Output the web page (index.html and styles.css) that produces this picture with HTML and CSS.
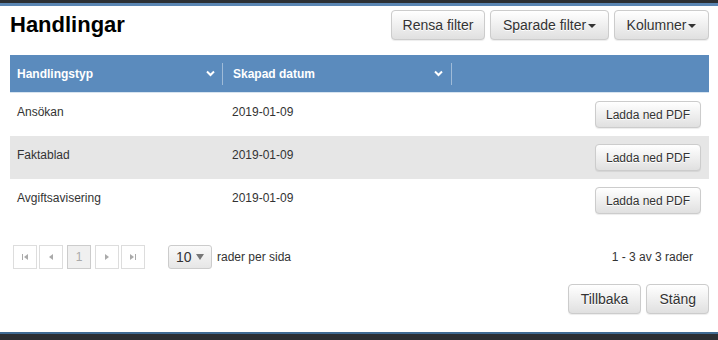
FILE: index.html
```html
<!DOCTYPE html>
<html lang="sv">
<head>
<meta charset="utf-8">
<title>Handlingar</title>
<link rel="stylesheet" href="styles.css">
</head>
<body>
<div class="topbar"></div>
<div class="dialog">
  <div class="head">
    <h1 class="title">Handlingar</h1>
    <div class="tools">
      <button class="btn btn-lg w-rensa">Rensa filter</button>
      <button class="btn btn-lg w-sparade">Sparade filter <span class="caret"></span></button>
      <button class="btn btn-lg w-kol">Kolumner <span class="caret"></span></button>
    </div>
  </div>

  <div class="grid">
    <div class="grow ghead">
      <div class="cell c1"><span>Handlingstyp</span><svg class="chev" width="9" height="7" viewBox="0 0 9 7"><path d="M1 1.5 L4.5 5 L8 1.5" fill="none" stroke="#fff" stroke-width="2"/></svg></div>
      <div class="cell c2"><span>Skapad datum</span><svg class="chev" width="9" height="7" viewBox="0 0 9 7"><path d="M1 1.5 L4.5 5 L8 1.5" fill="none" stroke="#fff" stroke-width="2"/></svg></div>
      <div class="cell c3"></div>
    </div>
    <div class="grow">
      <div class="cell c1">Ansökan</div>
      <div class="cell c2">2019-01-09</div>
      <div class="cell c3"><button class="btn btn-sm">Ladda ned PDF</button></div>
    </div>
    <div class="grow alt">
      <div class="cell c1">Faktablad</div>
      <div class="cell c2">2019-01-09</div>
      <div class="cell c3"><button class="btn btn-sm">Ladda ned PDF</button></div>
    </div>
    <div class="grow">
      <div class="cell c1">Avgiftsavisering</div>
      <div class="cell c2">2019-01-09</div>
      <div class="cell c3"><button class="btn btn-sm">Ladda ned PDF</button></div>
    </div>
  </div>

  <div class="pager">
    <div class="pages">
      <span class="pg"><svg width="8" height="8" viewBox="0 0 8 8"><rect x="1" y="1" width="1" height="6" fill="#aaa"/><path d="M7 1 L3 4 L7 7 Z" fill="#aaa"/></svg></span>
      <span class="pg"><svg width="8" height="8" viewBox="0 0 8 8"><path d="M6 1 L2 4 L6 7 Z" fill="#aaa"/></svg></span>
      <span class="pg cur">1</span>
      <span class="pg"><svg width="8" height="8" viewBox="0 0 8 8"><path d="M2 1 L6 4 L2 7 Z" fill="#aaa"/></svg></span>
      <span class="pg"><svg width="8" height="8" viewBox="0 0 8 8"><path d="M1 1 L5 4 L1 7 Z" fill="#aaa"/><rect x="6" y="1" width="1" height="6" fill="#aaa"/></svg></span>
    </div>
    <div class="size">
      <span class="sel">10 <svg width="8" height="6" viewBox="0 0 8 6"><path d="M0 0 L8 0 L4 6 Z" fill="#777"/></svg></span>
      <span class="lbl">rader per sida</span>
    </div>
    <div class="info">1 - 3 av 3 rader</div>
  </div>

  <div class="foot">
    <button class="btn btn-lg">Tillbaka</button>
    <button class="btn btn-lg">Stäng</button>
  </div>
</div>
<div class="bottombar"></div>
</body>
</html>
```
FILE: styles.css
```css
html, body {
  margin: 0;
  padding: 0;
  background: #fff;
  font-family: "Liberation Sans", Arial, sans-serif;
  color: #333;
  overflow: hidden;
}
.topbar {
  height: 3px;
  background: #2c2f33;
  border-bottom: 3px solid #5b86b3;
}
.bottombar {
  height: 6px;
  background: #2b2e33;
  border-top: 2px solid #3f6a93;
}
.dialog {
  padding: 0 9px 0 10px;
  height: 326px;
  box-sizing: border-box;
}
.head {
  display: flex;
  justify-content: space-between;
  align-items: center;
  height: 30px;
  padding-top: 4px;
}
.title {
  margin: 0;
  font-size: 22px;
  font-weight: bold;
  color: #000;
  line-height: 30px;
}
.tools {
  display: flex;
  gap: 5px;
}
.btn {
  font-family: "Liberation Sans", Arial, sans-serif;
  color: #333;
  background-color: #e0e0e0;
  background-image: linear-gradient(to bottom, #fff 0, #e0e0e0 100%);
  border: 1px solid #ccc;
  border-radius: 4px;
  text-shadow: 0 1px 0 #fff;
  box-shadow: inset 0 1px 0 rgba(255,255,255,.15), 0 1px 1px rgba(0,0,0,.075);
  padding: 0;
  cursor: pointer;
}
.btn-lg {
  font-size: 14px;
  height: 30px;
  padding: 0 12px;
}
.btn-lg.w-rensa { width: 94px; padding: 0; }
.btn-lg.w-sparade { width: 119px; padding: 0; }
.btn-lg.w-kol { width: 95px; padding: 0; }
.caret {
  display: inline-block;
  width: 0;
  height: 0;
  margin-left: -2px;
  vertical-align: middle;
  border-top: 4px solid #333;
  border-left: 4px solid transparent;
  border-right: 4px solid transparent;
}
.grid {
  margin-top: 15px;
}
.grow {
  display: flex;
  height: 43px;
  align-items: center;
  font-size: 12px;
}
.grow.alt {
  background: #e6e6e6;
}
.ghead {
  height: 37px;
  background: #5b8bbd;
  color: #fff;
  font-weight: bold;
  border-bottom: 1px solid #d7e4f0;
}
.cell {
  box-sizing: border-box;
  display: flex;
  align-items: center;
}
.c1 { width: 213px; padding-left: 7px; }
.c2 { width: 229px; padding-left: 9px; }
.c3 { flex: 1; justify-content: flex-end; padding-right: 8px; }
.grow .c1, .grow .c2 { padding-bottom: 5px; }
.ghead .c1, .ghead .c2 {
  justify-content: space-between;
  height: 22px;
  padding-bottom: 0;
  border-right: 1px solid #9fbbd8;
}
.ghead .c1 { padding-right: 7px; }
.ghead .c2 { padding-right: 8px; padding-left: 10px; }
.chev { display: block; }
.btn-sm {
  font-size: 12px;
  height: 27px;
  width: 106px;
}
.pager {
  display: flex;
  align-items: center;
  margin-top: 23px;
  height: 24px;
  font-size: 12px;
}
.pages {
  display: flex;
  margin-left: 3px;
}
.pg {
  box-sizing: border-box;
  width: 24px;
  height: 24px;
  border: 1px solid #ddd;
  display: flex;
  align-items: center;
  justify-content: center;
  color: #aaa;
  margin-right: 2px;
}
.pg.cur {
  background: #f0f0f0;
  border-color: #ccc;
  margin: 0 4px 0 2px;
  font-size: 12px;
}
.size {
  display: flex;
  align-items: center;
  margin-left: 21px;
}
.sel {
  box-sizing: border-box;
  width: 44px;
  height: 24px;
  border: 1px solid #ccc;
  border-radius: 3px;
  background-image: linear-gradient(to bottom, #fafafa, #e6e6e6);
  display: flex;
  align-items: center;
  justify-content: space-between;
  padding: 0 7px 0 7px;
  font-size: 14px;
  color: #333;
}
.lbl { margin-left: 5px; }
.info {
  margin-left: auto;
  margin-right: 16px;
}
.foot {
  display: flex;
  justify-content: flex-end;
  gap: 5px;
  margin-top: 15px;
}
```
